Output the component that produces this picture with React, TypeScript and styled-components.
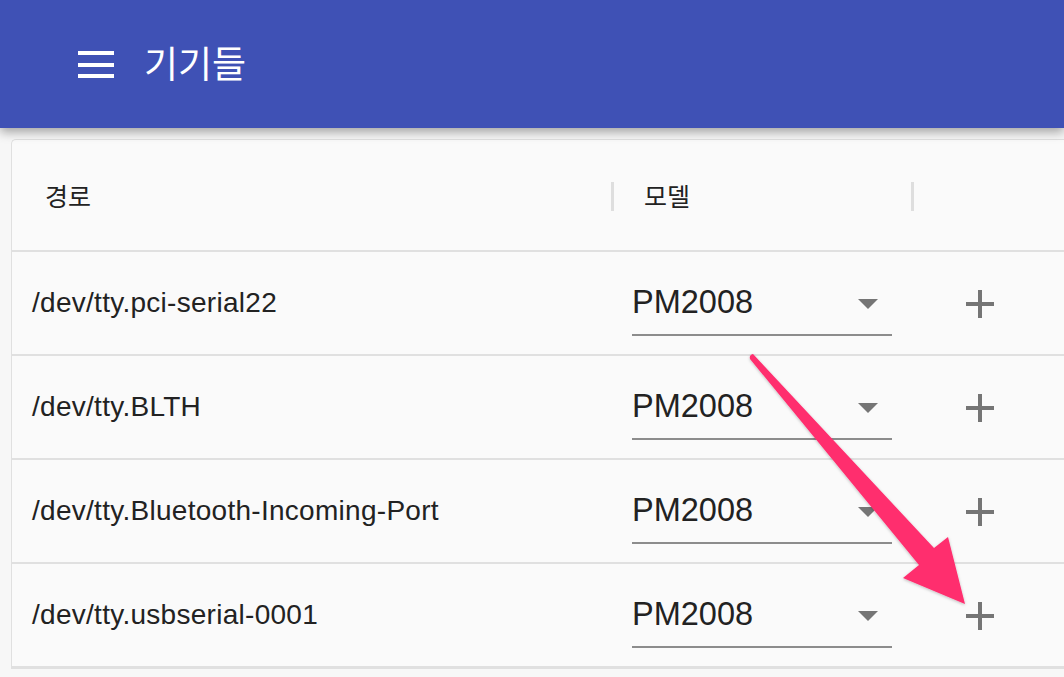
import React from "react";
import styled, { createGlobalStyle } from "styled-components";

const GlobalStyle = createGlobalStyle`
  html, body { margin: 0; padding: 0; }
  body {
    background: #f7f7f7;
    font-family: "Liberation Sans", "Noto Sans CJK KR", sans-serif;
    overflow: hidden;
    width: 1064px;
    height: 677px;
  }
`;

const Page = styled.div`
  position: relative;
  width: 1064px;
  height: 677px;
  overflow: hidden;
`;

const AppBar = styled.header`
  position: relative;
  z-index: 2;
  height: 128px;
  background: #3f51b5;
  display: flex;
  align-items: center;
  padding-left: 78px;
  gap: 30px;
  box-shadow: 0 4px 10px rgba(0, 0, 0, 0.35);
`;

const MenuIcon = styled.div`
  width: 36px;
  height: 27px;
  display: flex;
  flex-direction: column;
  justify-content: space-between;
  margin-top: 1px;
  span {
    display: block;
    height: 4px;
    background: #fff;
  }
`;

const Title = styled.h1`
  margin: 0;
  color: #fff;
  font-family: "Noto Sans CJK KR", sans-serif;
  font-weight: 400;
  font-size: 37px;
  line-height: 1;
  margin-top: -4px;
`;

const Content = styled.main`
  padding: 11px 0 0 11px;
`;

const Card = styled.section`
  background: #fafafa;
  border: 1.5px solid #e0e0e0;
  border-right: none;
  border-radius: 5px 0 0 0;
  width: 1100px;
`;

const Row = styled.div<{ $head?: boolean }>`
  display: grid;
  grid-template-columns: 600px 300px 1fr;
  height: ${(p) => (p.$head ? 109.5 : 102)}px;
  border-bottom: 2px solid #e0e0e0;
  align-items: center;
`;

const HeadCell = styled.div<{ $sep?: boolean }>`
  position: relative;
  height: 100%;
  display: flex;
  align-items: center;
  padding-left: ${(p) => (p.$sep ? 32 : 33)}px;
  font-family: "Noto Sans CJK KR", sans-serif;
  font-size: 25px;
  color: #222;
  padding-top: 1px;
  box-sizing: border-box;
  &::before {
    content: "";
    display: ${(p) => (p.$sep ? "block" : "none")};
    position: absolute;
    left: -1px;
    top: 42px;
    width: 3px;
    height: 29px;
    background: #dedede;
  }
`;

const PathCell = styled.div`
  padding-left: 20px;
  font-size: 28px;
  color: #222;
  letter-spacing: 0.28px;
  padding-top: 1px;
`;

const SelectCell = styled.div`
  padding-left: 20px;
`;

const Select = styled.div`
  width: 260px;
  height: 66px;
  box-sizing: border-box;
  border-bottom: 2px solid #8c8c8c;
  display: flex;
  align-items: center;
  justify-content: space-between;
  padding-right: 14px;
  margin-top: 1px;
`;

const SelectValue = styled.span`
  font-size: 32.5px;
  color: #222;
  margin-top: 0;
`;

const Caret = styled.span`
  width: 0;
  height: 0;
  border-left: 10px solid transparent;
  border-right: 10px solid transparent;
  border-top: 10px solid #757575;
  margin-top: 4px;
`;

const ActionCell = styled.div`
  padding-left: 54px;
  display: flex;
  align-items: center;
`;

const AddButton = styled.button`
  border: none;
  background: transparent;
  padding: 0;
  width: 28px;
  height: 28px;
  display: flex;
  align-items: center;
  justify-content: center;
  cursor: pointer;
  margin-top: 2px;
`;

const ArrowOverlay = styled.svg`
  position: absolute;
  left: 0;
  top: 0;
  pointer-events: none;
  z-index: 3;
`;

const devices = [
  "/dev/tty.pci-serial22",
  "/dev/tty.BLTH",
  "/dev/tty.Bluetooth-Incoming-Port",
  "/dev/tty.usbserial-0001",
];

const PlusIcon = () => (
  <svg width="28" height="28" viewBox="0 0 28 28">
    <rect x="12" y="0" width="4" height="28" fill="#757575" />
    <rect x="0" y="12" width="28" height="4" fill="#757575" />
  </svg>
);

export default function App() {
  return (
    <Page>
      <GlobalStyle />
      <AppBar>
        <MenuIcon>
          <span />
          <span />
          <span />
        </MenuIcon>
        <Title>기기들</Title>
      </AppBar>
      <Content>
        <Card>
          <Row $head>
            <HeadCell>경로</HeadCell>
            <HeadCell $sep>모델</HeadCell>
            <HeadCell $sep />
          </Row>
          {devices.map((d) => (
            <Row key={d}>
              <PathCell>{d}</PathCell>
              <SelectCell>
                <Select>
                  <SelectValue>PM2008</SelectValue>
                  <Caret />
                </Select>
              </SelectCell>
              <ActionCell>
                <AddButton aria-label="add">
                  <PlusIcon />
                </AddButton>
              </ActionCell>
            </Row>
          ))}
        </Card>
      </Content>
      <ArrowOverlay width="1064" height="677" viewBox="0 0 1064 677">
        <defs>
          <filter id="sh" x="-20%" y="-20%" width="140%" height="140%">
            <feDropShadow dx="0" dy="1" stdDeviation="1.5" floodColor="#000" floodOpacity="0.25" />
          </filter>
        </defs>
        <path
          d="M750 359 Q749 355 753 354 L934 548 L948 537 L965 604 L903 578 L919 565 Z"
          fill="#ff2d6e"
          filter="url(#sh)"
        />
      </ArrowOverlay>
    </Page>
  );
}
